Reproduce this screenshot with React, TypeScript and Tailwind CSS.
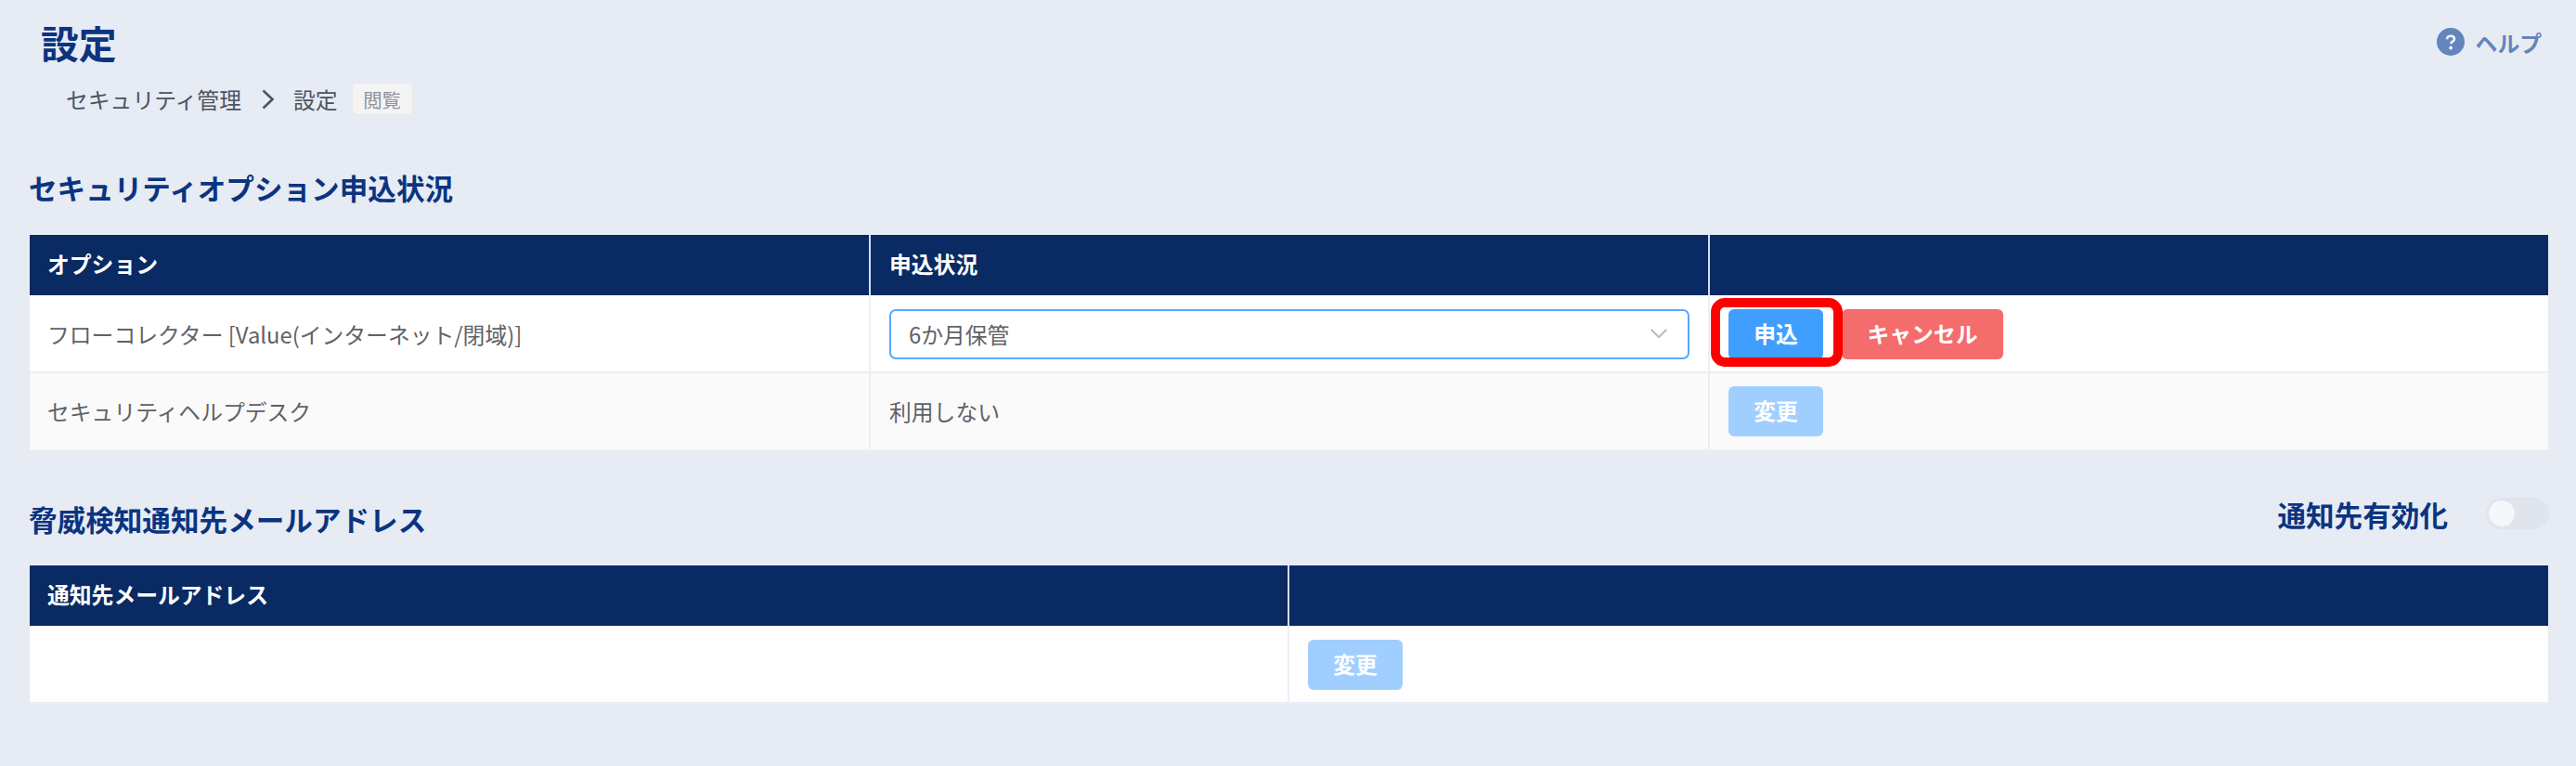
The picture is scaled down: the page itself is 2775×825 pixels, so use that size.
import React from "react";

const headingClass = "text-[30.6px] font-bold leading-[40px] text-[#0b3480]";

function SolidButton({ children, tone }: { children: React.ReactNode; tone: "primary" | "danger" | "muted" }) {
  const color = tone === "primary" ? "bg-[#409eff]" : tone === "danger" ? "bg-[#f56c6c]" : "bg-[#a0cfff]";
  return (
    <button className={`block h-[54.4px] shrink-0 rounded-[6px] px-[27.3px] pb-[2px] text-[23.8px] font-bold leading-[52px] whitespace-nowrap text-white ${color}`}>
      {children}
    </button>
  );
}

function HeadCell({ children, last }: { children?: React.ReactNode; last?: boolean }) {
  return (
    <div className={`flex h-[65px] items-center bg-[#092a62] pb-[3px] pl-[19px] text-[23.8px] font-bold leading-[36px] text-white ${last ? "" : "border-r-2 border-[#d5dbea]"}`}>
      {children}
    </div>
  );
}

function Cell({ children, last, striped }: { children?: React.ReactNode; last?: boolean; striped?: boolean }) {
  return (
    <div className={`flex h-[84px] items-center border-b-2 border-[#ebeef5] pr-[20px] text-[23.8px] leading-[36px] text-[#606266] ${striped ? "bg-[#fafafa]" : "bg-white pt-[2px]"} ${last ? "pl-[20px]" : "border-r-2 pl-[19px]"}`}>
      {children}
    </div>
  );
}

export default function App() {
  return (
    <div lang="ja" className="flex h-[825px] w-[2775px] flex-col overflow-hidden bg-[#e6ebf4] font-['Noto_Sans_CJK_JP',sans-serif]">
      <header className="flex h-[76px] items-start justify-between pr-[37px] pl-[44px]">
        <h1 className="pt-[17px] text-[40.8px] font-bold leading-[58px] text-[#0b3480]">設定</h1>
        <a className="flex items-center gap-[12px] pt-[29px] text-[#6484bc]">
          <svg width="30" height="30" viewBox="0 0 30 30" className="mb-[2px]">
            <circle cx="15" cy="15" r="15" fill="#6484bc" />
            <path d="M11 12.2c0-2.3 1.7-3.5 4-3.5s4 1.3 4 3.3c0 2.6-3.7 2.7-3.7 5.2" fill="none" stroke="#eef2f9" strokeWidth="2.6" />
            <circle cx="15.2" cy="21.5" r="1.9" fill="#eef2f9" />
          </svg>
          <span className="text-[23.8px] font-bold leading-[34px]">ヘルプ</span>
        </a>
      </header>

      <nav className="flex h-[62px] items-center pl-[71px] text-[23.8px] leading-[36px] text-[#4d5360]">
        <span>セキュリティ管理</span>
        <svg width="14" height="22" viewBox="0 0 14 22" className="mr-[20px] ml-[22px]" fill="none" stroke="#4d5360" strokeWidth="2.6">
          <path d="M1.5 1.5 11.5 11 1.5 20.5" />
        </svg>
        <span>設定</span>
        <span className="mb-[1px] ml-[15px] flex h-[35px] w-[66px] items-center justify-center rounded-[5px] border border-[#e9e9eb] bg-[#f4f4f5] text-[20.4px] leading-[30px] text-[#909399]">閲覧</span>
      </nav>

      <main className="pr-[30px] pl-[32px]">
        <section>
          <h2 className={`${headingClass} -ml-[1px] pt-[44px]`}>セキュリティオプション申込状況</h2>
          <div className="mt-[31px] grid grid-cols-[906px_904px_903px]">
            <HeadCell>オプション</HeadCell>
            <HeadCell><span className="pl-[1px]">申込状況</span></HeadCell>
            <HeadCell last />
            <Cell>フローコレクター [Value(インターネット/閉域)]</Cell>
            <Cell>
              <div className="ml-[1px] flex h-[54.4px] w-[862px] shrink-0 items-center justify-between rounded-[7px] border-2 border-[#55a9ff] bg-white pr-[22px] pl-[19px]">
                <span>6か月保管</span>
                <svg width="18" height="11" viewBox="0 0 18 11" fill="none" stroke="#b4b8c0" strokeWidth="2">
                  <path d="M.8 1 9 9.2 17.2 1" />
                </svg>
              </div>
            </Cell>
            <Cell last>
              <div className="flex gap-[20px]">
                <div className="relative">
                  <SolidButton tone="primary">申込</SolidButton>
                  <div className="pointer-events-none absolute -top-[12px] -left-[19px] h-[74px] w-[142px] rounded-[15px] border-[10px] border-[#ff0000]" />
                </div>
                <SolidButton tone="danger">キャンセル</SolidButton>
              </div>
            </Cell>
            <Cell striped>セキュリティヘルプデスク</Cell>
            <Cell striped><span className="pl-[1px]">利用しない</span></Cell>
            <Cell striped last><SolidButton tone="muted">変更</SolidButton></Cell>
          </div>
        </section>

        <section>
          <div className="flex h-[123px] items-start justify-between">
            <h2 className={`${headingClass} -ml-[1px] pt-[53px]`}>脅威検知通知先メールアドレス</h2>
            <div className="flex items-start pt-[48px]">
              <span className={headingClass}>通知先有効化</span>
              <span className="mt-[2px] -mr-[1px] ml-[41px] flex h-[34px] w-[68px] items-center rounded-full bg-[#dfe4ed] pl-[3px]">
                <span className="size-[28px] rounded-full bg-[#f5f7fb]" />
              </span>
            </div>
          </div>
          <div className="grid grid-cols-[1357px_1356px]">
            <HeadCell>通知先メールアドレス</HeadCell>
            <HeadCell last />
            <Cell />
            <Cell last><SolidButton tone="muted">変更</SolidButton></Cell>
          </div>
        </section>
      </main>
    </div>
  );
}
